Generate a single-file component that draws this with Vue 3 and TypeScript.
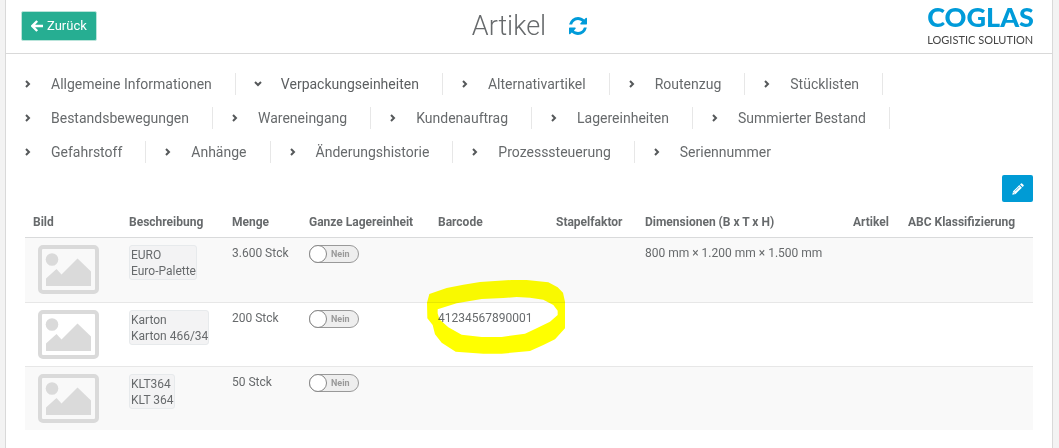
<script setup lang="ts">
import { ref } from 'vue'

interface Packaging {
  code: string
  name: string
  amount: string
  full: boolean
  barcode: string
  dimensions: string
  marked: boolean
}

const tabs: string[] = [
  'Allgemeine Informationen',
  'Verpackungseinheiten',
  'Alternativartikel',
  'Routenzug',
  'Stücklisten',
  'Bestandsbewegungen',
  'Wareneingang',
  'Kundenauftrag',
  'Lagereinheiten',
  'Summierter Bestand',
  'Gefahrstoff',
  'Anhänge',
  'Änderungshistorie',
  'Prozesssteuerung',
  'Seriennummer',
]
const active = ref('Verpackungseinheiten')

const columns: string[] = [
  'Bild',
  'Beschreibung',
  'Menge',
  'Ganze Lagereinheit',
  'Barcode',
  'Stapelfaktor',
  'Dimensionen (B x T x H)',
  'Artikel',
  'ABC Klassifizierung',
]

const rows = ref<Packaging[]>([
  { code: 'EURO', name: 'Euro-Palette', amount: '3.600 Stck', full: false, barcode: '', dimensions: '800 mm × 1.200 mm × 1.500 mm', marked: false },
  { code: 'Karton', name: 'Karton 466/34', amount: '200 Stck', full: false, barcode: '41234567890001', dimensions: '', marked: true },
  { code: 'KLT364', name: 'KLT 364', amount: '50 Stck', full: false, barcode: '', dimensions: '', marked: false },
])
</script>

<template>
  <main class="panel">
    <header class="topbar">
      <button class="back" type="button">
        <svg class="back-icon" viewBox="0 0 12 12" aria-hidden="true">
          <path d="M6.2 1 L1.3 6 L6.2 11 M1.6 6 H12" />
        </svg>
        Zurück
      </button>
      <div class="heading">
        <h1>Artikel</h1>
        <button class="refresh" type="button" aria-label="Aktualisieren">
          <svg viewBox="0 0 1536 1536" aria-hidden="true">
            <path
              d="M1511 928q0 5-1 7-64 268-268 434.500T764 1536q-146 0-282.500-55T238 1324l-129 129q-19 19-45 19t-45-19-19-45V960q0-26 19-45t45-19h448q26 0 45 19t19 45-19 45l-137 137q71 66 161 102t187 36q134 0 250-65t186-179q11-17 53-117 8-23 30-23h192q13 0 22.500 9.500t9.500 22.500zM1536 128v448q0 26-19 45t-45 19h-448q-26 0-45-19t-19-45 19-45l138-138Q969 256 768 256q-134 0-250 65T332 500q-11 17-53 117-8 23-30 23H50q-13 0-22.500-9.500T18 608v-7q65-268 270-434.500T768 0q146 0 284 55.500T1297 212l130-129q19-19 45-19t45 19 19 45z"
            />
          </svg>
        </button>
      </div>
      <div class="brand">
        <span class="brand-name">COGLAS</span>
        <span class="brand-claim">LOGISTIC SOLUTION</span>
      </div>
    </header>

    <nav class="tabs">
      <button
        v-for="tab in tabs"
        :key="tab"
        type="button"
        class="tab"
        :class="{ open: tab === active }"
        @click="active = tab"
      >
        <svg class="chevron" viewBox="0 0 8 8" aria-hidden="true">
          <path d="M2 1 L5 4 L2 7" />
        </svg>
        {{ tab }}
      </button>
    </nav>

    <section class="content">
      <div class="tools">
        <button class="edit" type="button" aria-label="Bearbeiten">
          <svg viewBox="0 0 12 12" aria-hidden="true">
            <path class="pencil" d="M0.300 11.700 L1.100 8.300 L7.300 2.100 L9.900 4.700 L3.700 10.900 Z M8 1.400 L9 .4 Q9.500 0 10 .4 L11.600 2 Q12 2.500 11.600 3 L10.600 4 Z" />
            <path class="pencil-line" d="M3 8.300 L7.500 3.800 M1.500 9.300 L2.700 10.500" />
          </svg>
        </button>
      </div>

      <table>
        <thead>
          <tr>
            <th v-for="column in columns" :key="column" scope="col">{{ column }}</th>
          </tr>
        </thead>
        <tbody>
          <tr v-for="row in rows" :key="row.code">
            <td>
              <svg class="thumb" viewBox="0 0 61 49" aria-hidden="true">
                <rect x="2" y="2" width="57" height="45" rx="3" />
                <circle cx="14" cy="14.500" r="6.300" />
                <path d="M8 41 V33.500 L18.500 24 L23.500 29.500 L39.500 13.500 L53 26.500 V41 Z" />
              </svg>
            </td>
            <td>
              <div class="article">{{ row.code }}<br />{{ row.name }}</div>
            </td>
            <td>{{ row.amount }}</td>
            <td>
              <label class="switch">
                <input v-model="row.full" type="checkbox" :aria-label="'Ganze Lagereinheit ' + row.code" />
                <span class="knob"></span>
                <span class="state">{{ row.full ? 'Ja' : 'Nein' }}</span>
              </label>
            </td>
            <td class="barcode">
              {{ row.barcode }}
              <svg v-if="row.marked" class="marker" viewBox="411 240 414 222" aria-hidden="true">
                <path
                  fill-rule="evenodd"
                  d="M412 355 L411 308 L418 282 L470 264 L520 254 L570 246 L665 240 L710 240 L775 247 L803 262 L819 278 L825 305 L825 385 L795 418 L760 435 L720 453 L635 461 L580 461 L497 455 L455 428 L435 403 L428 375 Z M443 328 L500 310 L575 297 L640 294 L680 291 L720 293 L760 299 L790 315 L803 332 L803 345 L780 365 L740 385 L705 401 L635 411 L575 411 L515 404 L475 382 L448 358 L443 340 Z"
                />
              </svg>
            </td>
            <td></td>
            <td>{{ row.dimensions }}</td>
            <td></td>
            <td></td>
          </tr>
        </tbody>
      </table>
    </section>
  </main>
</template>

<style>
body {
  margin: 0;
  background: #f3f3f3;
}
</style>

<style scoped>
.panel {
  box-sizing: border-box;
  min-height: 100vh;
  margin: 0 6px 0 5px;
  border: solid #d9d9d9;
  border-width: 0 1px;
  background: #fff;
  color: #676a6c;
  font: 12px/16px Roboto, sans-serif;
}
button {
  margin: 0;
  padding: 0;
  border: 0;
  background: none;
  color: inherit;
  font: inherit;
  cursor: pointer;
}
.topbar {
  display: grid;
  grid-template-columns: 1fr auto 1fr;
  align-items: center;
  box-sizing: border-box;
  height: 54px;
  padding: 0 18px 2px 15px;
  border-bottom: 1px solid #d9d9d9;
}
.back {
  display: flex;
  align-items: center;
  justify-self: start;
  gap: 4px;
  height: 30px;
  padding: 0 9px;
  border: 1px solid #b9e4da;
  border-radius: 2px;
  background: #26ae92;
  color: #fff;
  font-size: 13px;
}
.back-icon {
  width: 12px;
  height: 12px;
  fill: none;
  stroke: #fff;
  stroke-width: 2.4;
}
.heading {
  display: flex;
  align-items: center;
  gap: 23px;
  padding-left: 4px;
}
h1 {
  margin: 0;
  font-size: 27px;
  line-height: 32px;
  font-weight: 300;
}
.refresh,
.refresh svg {
  display: block;
  width: 18px;
  height: 18px;
  fill: #009bd9;
}
.brand {
  display: flex;
  flex-direction: column;
  align-self: start;
  justify-self: end;
  padding-top: 1px;
  font-family: Lato, sans-serif;
}
.brand-name {
  color: #009bd9;
  font-size: 27px;
  line-height: 32px;
  font-weight: 900;
}
.brand-claim {
  color: #444;
  font-size: 11px;
  line-height: 14px;
}
.tabs {
  display: flex;
  flex-wrap: wrap;
  row-gap: 12px;
  padding: 19px 40px 12px 0;
}
.tab {
  display: flex;
  align-items: center;
  gap: 19px;
  height: 22px;
  padding: 0 23px 0 18px;
  border-right: 1px solid #e7e7e7;
  font-size: 14px;
}
.tab:last-child {
  border-right: 0;
}
.tab.open {
  color: #5c5f61;
}
.chevron {
  width: 8px;
  height: 8px;
  fill: none;
  stroke: #55585a;
  stroke-width: 2;
}
.open .chevron {
  transform: rotate(90deg);
}
.content {
  padding: 0 19px;
}
.tools {
  display: flex;
  justify-content: flex-end;
}
.edit {
  display: grid;
  place-items: center;
  width: 31px;
  height: 27px;
  border-radius: 2px;
  background: #009bd5;
}
.edit svg {
  width: 12px;
  height: 12px;
}
.pencil {
  fill: #fff;
}
.pencil-line {
  fill: none;
  stroke: #009bd5;
  stroke-width: 0.7;
}
table {
  width: 100%;
  margin-top: 4px;
  border-spacing: 0;
  table-layout: fixed;
}
th {
  box-sizing: border-box;
  height: 32px;
  padding: 0 0 0 8px;
  border-bottom: 1px solid #d9dadb;
  font-weight: 700;
  text-align: left;
  white-space: nowrap;
}
th:nth-child(1) { width: 96px; }
th:nth-child(2) { width: 103px; }
th:nth-child(3) { width: 77px; }
th:nth-child(4) { width: 129px; }
th:nth-child(5) { width: 118px; }
th:nth-child(6) { width: 89px; }
th:nth-child(7) { width: 208px; }
th:nth-child(8) { width: 55px; }
th:nth-child(9) { width: 133px; }
td {
  box-sizing: border-box;
  height: 64px;
  padding: 7px 0 7px 8px;
  vertical-align: top;
  white-space: nowrap;
}
tr + tr td {
  border-top: 1px solid #e7e7e7;
}
tbody tr:nth-child(odd) {
  background: #f9f9f9;
}
.thumb {
  display: block;
  width: 61px;
  height: 49px;
  margin-left: 5px;
  fill: #dadada;
}
.thumb rect {
  fill: none;
  stroke: #dadada;
  stroke-width: 4;
}
.article {
  display: inline-block;
  padding: 1px 0 0 1px;
  border: 1px solid #e7eaec;
  border-radius: 3px;
  background: #f3f3f4;
}
.switch {
  display: flex;
  align-items: center;
  box-sizing: border-box;
  width: 50px;
  height: 18px;
  border: 1px solid #999;
  border-radius: 9px;
  background: #eee;
  cursor: pointer;
}
.switch input {
  position: absolute;
  opacity: 0;
}
.knob {
  box-sizing: border-box;
  width: 18px;
  height: 18px;
  margin-left: -1px;
  border: 1px solid #888;
  border-radius: 50%;
  background: #fff;
}
.state {
  margin-left: 4px;
  color: #999;
  font-size: 9px;
  font-weight: 700;
}
.barcode {
  position: relative;
}
.marker {
  position: absolute;
  top: -23px;
  left: -3px;
  width: 138px;
  height: 74px;
  fill: #ff0;
  mix-blend-mode: multiply;
  pointer-events: none;
}
</style>
